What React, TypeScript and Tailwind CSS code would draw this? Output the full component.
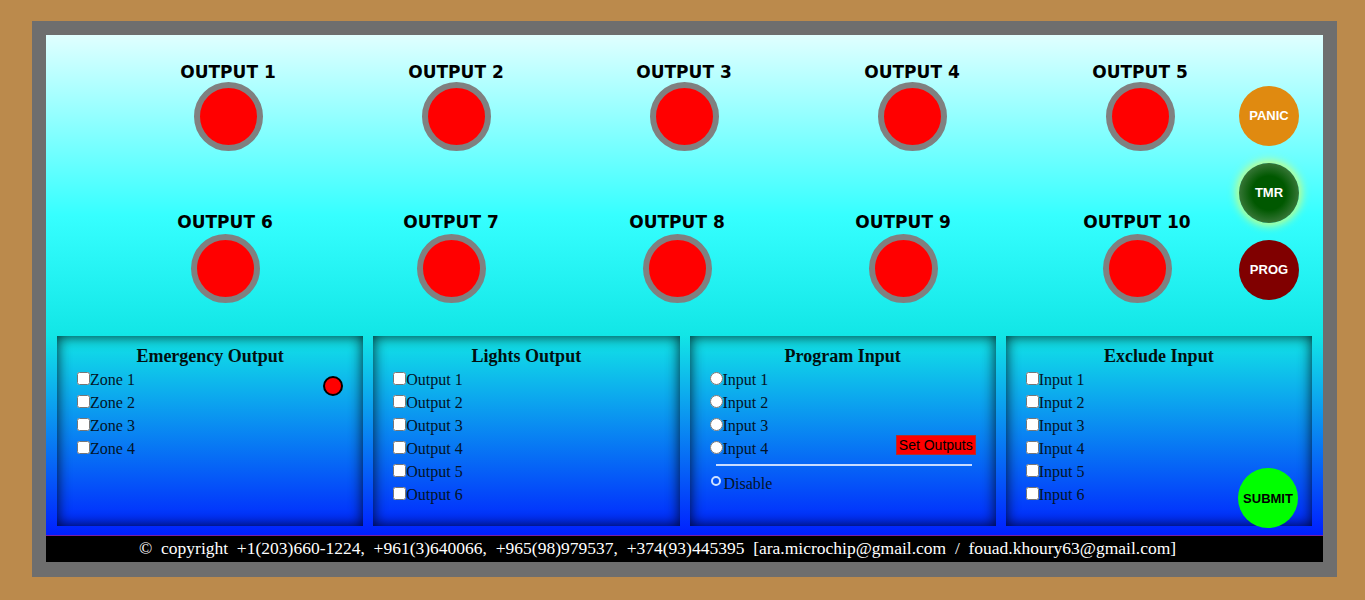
import React from 'react';

const serif = "font-['Liberation_Serif','Times_New_Roman',serif]";
const sans = "font-['Liberation_Sans',Arial,sans-serif]";

function Lamp({ label, extra = '', tight }: { label: string; extra?: string; tight?: boolean }) {
  return (
    <div className={`flex w-[120px] flex-col items-center ${extra}`}>
      <div
        className={`h-[20px] whitespace-nowrap font-['DejaVu_Sans',Verdana,sans-serif] text-[17px] font-bold leading-[20px] text-black ${tight ? 'mt-[2px]' : ''}`}
      >
        {label}
      </div>
      <div
        className={`h-[69px] w-[69px] rounded-full border-[6px] border-[#808080] bg-[#ff0000] ${tight ? 'mt-0' : 'mt-[2px]'}`}
      />
    </div>
  );
}

function SideButton({ label, className }: { label: string; className: string }) {
  return (
    <div className={`flex h-[60px] w-[60px] items-center justify-center rounded-full ${sans} text-[13px] font-bold text-white ${className}`}>
      {label}
    </div>
  );
}

function Check({ label, radio }: { label: string; radio?: boolean }) {
  return (
    <span className="whitespace-nowrap">
      <input type={radio ? 'radio' : 'checkbox'} readOnly className="m-0 h-[13px] w-[13px] align-baseline" />
      {label}
    </span>
  );
}

function Panel({ title, children }: { title: string; children: React.ReactNode }) {
  return (
    <div className={`relative pt-[10px] shadow-[inset_0_0_14px_rgba(0,0,0,0.85)] ${serif} text-[#031428]`}>
      <h3 className="text-center text-[18px] font-bold leading-[20px] text-[#021010]">{title}</h3>
      <div className="mt-[2px] pl-[20px] text-[16px] leading-[23px]">{children}</div>
    </div>
  );
}

export default function App() {
  const nb = '\u00a0';
  const footer = `©${nb} copyright${nb} +1(203)660-1224,${nb} +961(3)640066,${nb} +965(98)979537,${nb} +374(93)445395${nb} [ara.microchip@gmail.com${nb} /${nb} fouad.khoury63@gmail.com]`;

  return (
    <div className="min-h-[600px] w-full bg-[#bb8a4c] pl-[32px] pt-[21px]">
      <div className="w-[1305px] bg-[#6e6e6e] px-[14px] pb-[15px] pt-[14px]">
        {/* main dashboard */}
        <div className="flex h-[500px] flex-col bg-[linear-gradient(to_bottom,#e0ffff_0%,#36ffff_36%,#12e6e6_60%,#0020ff_100%)]">
          <div className="flex h-[301px]">
            <div className="flex-1 pt-[25px]">
              <div className="flex gap-[108px] pl-[122px]">
                {[1, 2, 3, 4, 5].map(n => <Lamp key={n} tight label={`OUTPUT ${n}`} />)}
              </div>
              <div className="mt-[61px] flex gap-[106px] pl-[119px]">
                {[6, 7, 8, 9].map(n => <Lamp key={n} label={`OUTPUT ${n}`} />)}
                <Lamp label="OUTPUT 10" extra="ml-[8px]" />
              </div>
            </div>
            <div className="mr-[24px] flex w-[60px] flex-col gap-[17px] pt-[51px]">
              <SideButton label="PANIC" className="bg-[#e08a10]" />
              <SideButton
                label="TMR"
                className="bg-[radial-gradient(circle,#005800_40%,#6a926a_100%)] shadow-[0_0_8px_3px_rgba(210,255,120,0.9)]"
              />
              <SideButton label="PROG" className="bg-[#800000]" />
            </div>
          </div>

          <div className="grid h-[190px] grid-cols-4 gap-[10px] px-[11px]">
            <Panel title="Emergency Output">
              {['Zone 1', 'Zone 2', 'Zone 3', 'Zone 4'].map(z => (
                <div key={z}><Check label={z} /></div>
              ))}
              <div className="absolute right-[20px] top-[40px] h-[20px] w-[20px] rounded-full border-2 border-black bg-[#ff0000]" />
            </Panel>

            <Panel title="Lights Output">
              {[1, 2, 3, 4, 5, 6].map(n => (
                <div key={n}><Check label={`Output ${n}`} /></div>
              ))}
            </Panel>

            <Panel title="Program Input">
              {[1, 2, 3].map(n => (
                <div key={n}><Check radio label={`Input ${n}`} /></div>
              ))}
              <div className="flex items-center justify-between pr-[20px]">
                <Check radio label="Input 4" />
                <span className={`-mt-[7px] border border-[#b03030] bg-[#ff0000] px-[2px] ${sans} text-[14px] leading-[18px] text-black`}>
                  Set Outputs
                </span>
              </div>
              <div className="ml-[6px] mr-[24px] mt-[4px] h-[2px] bg-[#c8dcff]" />
              <div className="mt-[6px] flex items-center">
                <span className="ml-[1px] mr-[3px] h-[10px] w-[10px] -translate-y-[3px] rounded-full border-2 border-[#cfe2ff]" />
                <span>Disable</span>
              </div>
            </Panel>

            <Panel title="Exclude Input">
              {[1, 2, 3, 4, 5, 6].map(n => (
                <div key={n}><Check label={`Input ${n}`} /></div>
              ))}
              <div className={`absolute bottom-[-2px] right-[14px] flex h-[60px] w-[60px] items-center justify-center rounded-full bg-[#00ff00] ${sans} text-[13px] font-bold text-black`}>
                SUBMIT
              </div>
            </Panel>
          </div>
          <div className="flex-1" />
        </div>

        {/* footer */}
        <div className={`h-[27px] border-t border-[#7a1fa2] bg-black pl-[93px] ${serif} text-[17.5px] leading-[25px] text-white whitespace-nowrap`}>
          {footer}
        </div>
      </div>
    </div>
  );
}
